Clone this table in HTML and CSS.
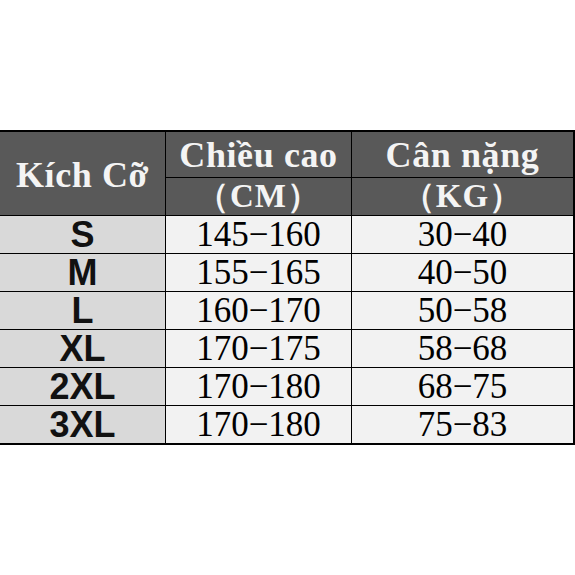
FILE: index.html
```html
<!DOCTYPE html>
<html>
<head>
<meta charset="utf-8">
<link rel="stylesheet" href="styles.css">
</head>
<body>
<div class="page">
  <div class="sheet">
    <div class="cell head size-head">Kích Cỡ</div>
    <div class="cell head">Chiều cao</div>
    <div class="cell head">Cân nặng</div>
    <div class="cell head sub">（CM）</div>
    <div class="cell head sub">（KG）</div>

    <div class="cell size">S</div><div class="cell num">145−160</div><div class="cell num">30−40</div>
    <div class="cell size">M</div><div class="cell num">155−165</div><div class="cell num">40−50</div>
    <div class="cell size">L</div><div class="cell num">160−170</div><div class="cell num">50−58</div>
    <div class="cell size">XL</div><div class="cell num">170−175</div><div class="cell num">58−68</div>
    <div class="cell size">2XL</div><div class="cell num">170−180</div><div class="cell num">68−75</div>
    <div class="cell size">3XL</div><div class="cell num">170−180</div><div class="cell num">75−83</div>
  </div>
</div>
</body>
</html>
```

FILE: styles.css
```css
html, body {
  margin: 0;
  padding: 0;
  background: #ffffff;
}

.page {
  width: 575px;
  height: 575px;
  padding-top: 130px;
  box-sizing: border-box;
}

.sheet {
  display: grid;
  grid-template-columns: 165px 185px 221px;
  grid-template-rows: 45px 37px repeat(6, 37px);
  gap: 1px;
  background: #000;
  border-top: 2px solid #000;
  border-right: 2px solid #000;
  border-bottom: 2px solid #000;
  width: 573px;
}

.cell {
  display: flex;
  align-items: center;
  justify-content: center;
  white-space: nowrap;
  line-height: 1;
}

.head {
  background: #595959;
  color: #f4f4f4;
  font-family: "Liberation Serif", serif;
  font-weight: bold;
  font-size: 36px;
  letter-spacing: 0.6px;
}

.size-head {
  grid-row: 1 / span 2;
  padding-top: 2px;
}

.sub {
  font-size: 33px;
  letter-spacing: 1px;
}

.size {
  background: #d9d9d9;
  color: #111;
  font-family: "Liberation Sans", sans-serif;
  font-weight: bold;
  font-size: 36px;
}

.num {
  background: #f2f2f2;
  color: #000;
  font-family: "Liberation Serif", serif;
  font-size: 35px;
}
```
